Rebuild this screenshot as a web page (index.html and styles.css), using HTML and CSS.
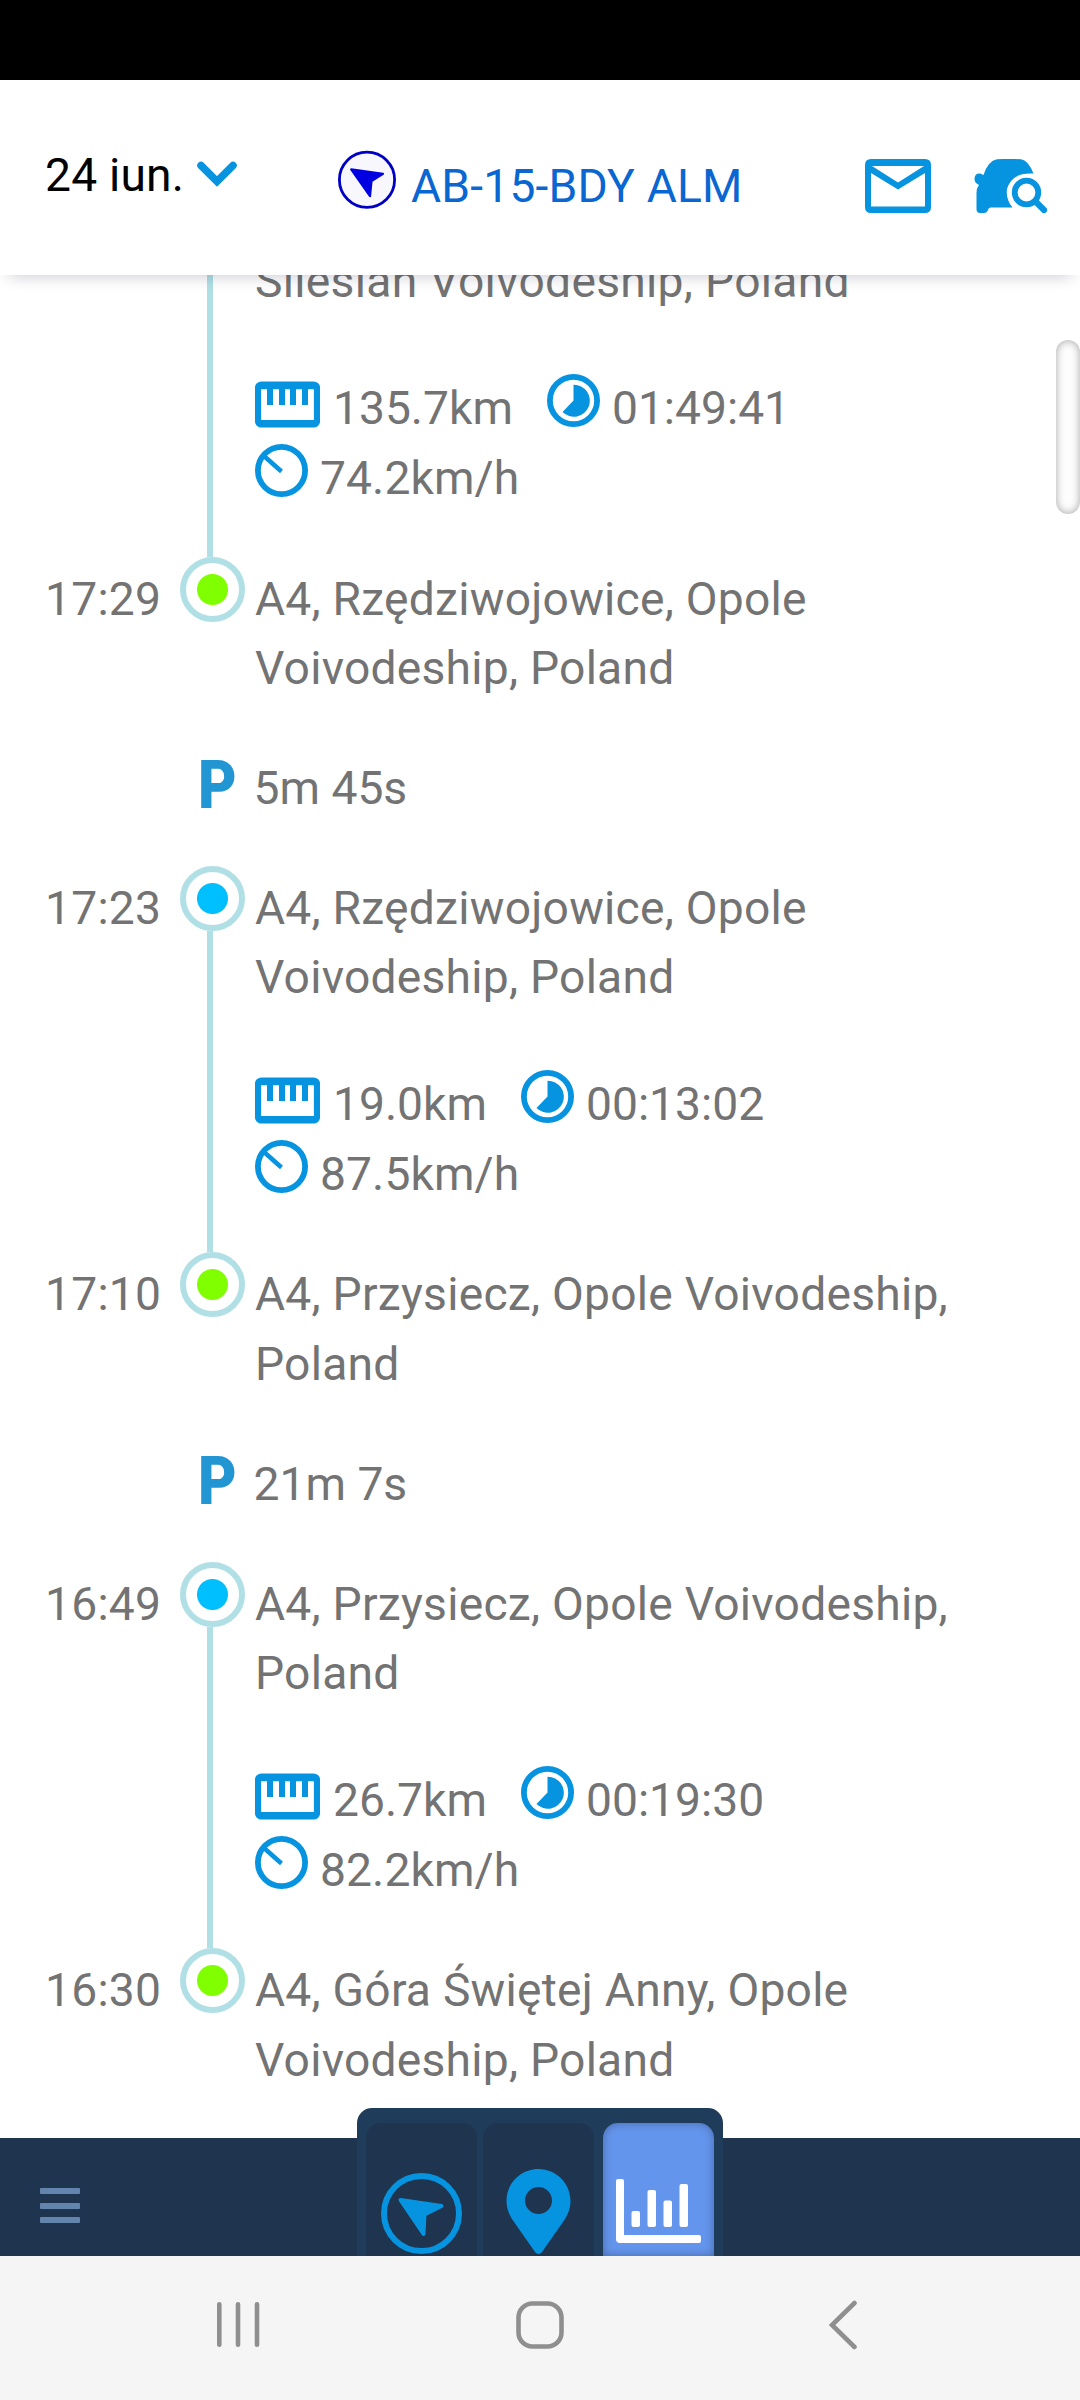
FILE: index.html
```html
<!DOCTYPE html>
<html lang="ro">
  <head>
    <meta charset="UTF-8" />
    <meta name="viewport" content="width=device-width, initial-scale=1.0" />
    <title>AB-15-BDY ALM</title>
    <link rel="stylesheet" href="styles.css">
  </head>
  <body>
    <!-- shared icons -->
    <svg class="sprite">
      <symbol id="ruler" viewBox="0 0 65 54">
        <rect x="3" y="10.5" width="59" height="40" rx="3.5" fill="none" stroke="currentColor" stroke-width="6.2" />
        <path d="M5 8h55v7.2H5zM12 12h6v19h-6zM24 12h6v19h-6zM35 12h6v19h-6zM47 12h6v19h-6zM5 46h55v6H5z" />
      </symbol>
      <symbol id="clock" viewBox="0 0 53 53">
        <circle cx="26.5" cy="26.5" r="23.6" fill="none" stroke="currentColor" stroke-width="5.8" />
        <path d="M26.5 10.7a16 16 0 1 1-11 27.3l11-11.5z" />
      </symbol>
      <symbol id="speed" viewBox="0 0 53 53">
        <circle cx="26.5" cy="26.5" r="23.6" fill="none" stroke="currentColor" stroke-width="5.8" />
        <path d="M9 12L26.5 27.5" stroke="currentColor" stroke-width="4.5" />
      </symbol>
    </svg>

    <div class="screen">
      <div class="status-bar"></div>

      <header class="header">
        <div class="date">
          <span>24 iun.</span>
          <svg width="40" height="26" viewBox="0 0 40 26"><path d="M4 4.5L20 20.5L36 4.5" fill="none" stroke="currentColor" stroke-width="7.5" stroke-linecap="round" /></svg>
        </div>
        <div class="vehicle">
          <svg width="58" height="60" viewBox="0 0 58 60">
            <circle cx="29" cy="29.7" r="27.6" fill="#f8f8fc" stroke="#0000c4" stroke-width="2.8" />
            <path d="M13.2 19.3L45 23.8L33.5 31L32 46.2Z" fill="#0000e0" stroke="#0000e0" stroke-width="2.2" stroke-linejoin="round" />
          </svg>
          <span>AB-15-BDY ALM</span>
        </div>
        <div class="actions">
          <svg width="66" height="54" viewBox="0 0 66 54">
            <path fill-rule="evenodd" d="M6 0H60Q66 0 66 6V48Q66 54 60 54H6Q0 54 0 48V6Q0 0 6 0ZM6 14V47.500H60V14L33 30.500ZM7 7L33 23.500L59 7Z" />
          </svg>
          <svg width="74" height="54" viewBox="0 0 74 54">
            <path d="M23 .3Q35-.5 47 .3Q54 1 59.500 14.500Q38 13 33 30Q31.500 40 38.500 48.500H16.500Q14 49 14 51Q13 54 10 54H6Q2.500 54 2.500 50V34Q2.500 29 5 26Q.5 24 .5 19.500Q1 14 6 14.500Q8 15 9.500 16Q14 2 23 .3Z" />
            <circle cx="52.500" cy="33.500" r="11.800" fill="none" stroke="currentColor" stroke-width="5.800" />
            <path d="M62 43L70 51" stroke="currentColor" stroke-width="6.200" stroke-linecap="round" />
          </svg>
        </div>
      </header>

      <main class="timeline">
        <div class="row before">
          <div class="time"></div>
          <div class="marker"><i class="line"></i></div>
          <div class="address">Silesian Voivodeship, Poland</div>
        </div>
        <div class="row stats">
          <div class="time"></div>
          <div class="marker"><i class="line"></i></div>
          <div class="values">
            <span class="distance"><svg><use href="#ruler" /></svg>135.7km</span>
            <span class="duration"><svg><use href="#clock" /></svg>01:49:41</span>
            <span class="average"><svg><use href="#speed" /></svg>74.2km/h</span>
          </div>
        </div>

        <div class="row stop">
          <div class="time">17:29</div>
          <div class="marker"><i class="ring"></i></div>
          <div class="address">A4, Rzędziwojowice, Opole Voivodeship, Poland</div>
        </div>
        <div class="row parking">
          <div class="p-sign"><b>P</b></div>
          <div>5m 45s</div>
        </div>
        <div class="row start">
          <div class="time">17:23</div>
          <div class="marker"><i class="ring"></i><i class="line"></i></div>
          <div class="address">A4, Rzędziwojowice, Opole Voivodeship, Poland</div>
        </div>
        <div class="row stats">
          <div class="time"></div>
          <div class="marker"><i class="line"></i></div>
          <div class="values">
            <span class="distance"><svg><use href="#ruler" /></svg>19.0km</span>
            <span class="duration"><svg><use href="#clock" /></svg>00:13:02</span>
            <span class="average"><svg><use href="#speed" /></svg>87.5km/h</span>
          </div>
        </div>

        <div class="row stop">
          <div class="time">17:10</div>
          <div class="marker"><i class="ring"></i></div>
          <div class="address">A4, Przysiecz, Opole Voivodeship, Poland</div>
        </div>
        <div class="row parking">
          <div class="p-sign"><b>P</b></div>
          <div>21m 7s</div>
        </div>
        <div class="row start">
          <div class="time">16:49</div>
          <div class="marker"><i class="ring"></i><i class="line"></i></div>
          <div class="address">A4, Przysiecz, Opole Voivodeship, Poland</div>
        </div>
        <div class="row stats">
          <div class="time"></div>
          <div class="marker"><i class="line"></i></div>
          <div class="values">
            <span class="distance"><svg><use href="#ruler" /></svg>26.7km</span>
            <span class="duration"><svg><use href="#clock" /></svg>00:19:30</span>
            <span class="average"><svg><use href="#speed" /></svg>82.2km/h</span>
          </div>
        </div>

        <div class="row stop">
          <div class="time">16:30</div>
          <div class="marker"><i class="ring"></i></div>
          <div class="address">A4, Góra Świętej Anny, Opole Voivodeship, Poland</div>
        </div>
      </main>
      <div class="scroll-thumb"></div>

      <footer class="toolbar">
        <div class="menu"><i></i><i></i><i></i></div>
        <div class="tabs">
          <div class="tab">
            <svg width="111" height="133" viewBox="0 0 111 133">
              <circle cx="55.500" cy="90.500" r="37.500" fill="none" stroke="currentColor" stroke-width="6" />
              <path d="M34.500 77L75.500 83L58.500 91.500L57.500 111Z" stroke="currentColor" stroke-width="4" stroke-linejoin="round" />
            </svg>
          </div>
          <div class="tab">
            <svg width="111" height="133" viewBox="0 0 111 133">
              <path fill-rule="evenodd" d="M55.500 46C73 46 87.500 60 87.500 78C87.500 86 84.500 92 81 97.500L59 129Q55.500 133 52 129L30 97.500C26.500 92 23.500 86 23.500 78C23.500 60 38 46 55.500 46ZM55.500 64a13.500 13.500 0 1 0 0 27a13.500 13.500 0 1 0 0-27Z" />
            </svg>
          </div>
          <div class="tab active">
            <svg width="111" height="133" viewBox="0 0 111 133">
              <path d="M13 58Q13 56 15 56H19Q21 56 21 58V112H96Q98 112 98 114V118Q98 120 96 120H17Q13 120 13 116Z" />
              <rect x="28.500" y="88" width="8.500" height="16" rx="2" />
              <rect x="44.500" y="67" width="8.500" height="37" rx="2" />
              <rect x="60.500" y="77.500" width="8.500" height="26.500" rx="2" />
              <rect x="76.500" y="61" width="8.500" height="43" rx="2" />
            </svg>
          </div>
        </div>
      </footer>

      <nav class="system-nav">
        <svg width="44" height="48" viewBox="0 0 44 48"><path d="M3.300 3.300V43.700M22 3.300V43.700M41 3.300V43.700" /></svg>
        <svg width="48" height="48" viewBox="0 0 48 48"><rect x="2.500" y="2.500" width="43" height="43" rx="14" /></svg>
        <svg width="28" height="50" viewBox="0 0 28 50"><path d="M25.500 3L3 25L25.500 47" /></svg>
      </nav>
    </div>
  </body>
</html>
```

FILE: styles.css
```css
* {
  box-sizing: border-box;
}

body {
  margin: 0;
  background: #fff;
  font-family: Roboto, sans-serif;
  font-size: 46.2px;
  line-height: 69.3px;
  color: #737373;
}

svg {
  display: block;
  fill: currentColor;
}

.sprite {
  display: none;
}

.screen {
  position: relative;
  display: flex;
  flex-direction: column;
  width: 1080px;
  height: 2400px;
  overflow: hidden;
}

.status-bar {
  height: 80px;
  background: #000;
}

/* header */
.header {
  display: flex;
  align-items: flex-start;
  height: 195px;
  background: #fff;
  box-shadow: 0 9px 16px -9px rgba(0, 10, 40, 0.24);
  letter-spacing: 0.2px;
  z-index: 1;
}

.date {
  display: flex;
  width: 338px;
  padding: 61px 0 0 45px;
  color: #000;
}

.date svg {
  margin: 20px 0 0 13px;
  color: #0693e0;
}

.vehicle {
  display: flex;
  flex: 1;
  padding-top: 70px;
  color: #0a66d0;
}

.vehicle span {
  margin: 2px 0 0 15px;
}

.actions {
  display: flex;
  gap: 43px;
  padding: 79px 32px 0 0;
  color: #0693e0;
}

/* timeline */
.timeline {
  flex: 1;
  min-height: 0;
  overflow: hidden;
}

.row {
  display: flex;
}

.before {
  margin-top: -27.7px;
}

.time {
  width: 180px;
  padding-left: 45px;
}

.time,
.address {
  letter-spacing: 0.24px;
}

.marker {
  display: flex;
  flex-direction: column;
  width: 65px;
  margin-right: 10px;
}

.line {
  flex: 1;
  width: 6px;
  margin-left: 27px;
  background: #b0e0e6;
}

.ring {
  height: 65px;
  border: 6px solid #b0e0e6;
  border-radius: 50%;
}

.stop .ring {
  background: radial-gradient(circle, #7fff00 15px, #fff 16px);
}

.start .ring {
  background: radial-gradient(circle, #00bfff 15px, #fff 16px);
}

.address {
  width: 750px;
}

.before .address,
.start .address {
  padding-bottom: 57.8px;
}

.before .address {
  letter-spacing: 0.3px;
}

.stop .time,
.stop .address,
.start .time,
.start .address {
  padding-top: 8px;
}

.stop .address {
  padding-bottom: 50.8px;
}

.parking {
  padding-bottom: 42.8px;
}

.p-sign {
  width: 253.500px;
  padding-left: 197.500px;
}

/* wide strokes, squeezed to the sign's width */
.p-sign b {
  display: block;
  width: 44px;
  height: 69px;
  font-size: 66px;
  font-weight: 900;
  color: #2196d3;
  transform: translateY(-3px) scaleX(0.9);
  transform-origin: left;
}

.values {
  display: flex;
  flex-wrap: wrap;
  width: 700px;
  padding-bottom: 43.5px;
}

.values span {
  display: flex;
}

.values svg {
  width: 53px;
  height: 53px;
  margin-right: 12px;
  color: #0693e0;
}

.values .distance svg {
  width: 65px;
  height: 54px;
  margin-right: 13px;
}

.duration {
  margin: 0 60px 0 34px;
}

.average {
  width: 400px;
  letter-spacing: 0.1px;
}

.scroll-thumb {
  position: absolute;
  top: 340px;
  right: 0;
  width: 24px;
  height: 174px;
  border-radius: 12px;
  background: #fdfdfd;
  box-shadow: inset 0 0 9px rgba(0, 0, 0, 0.35);
}

/* bottom toolbar */
.toolbar {
  display: flex;
  align-items: flex-end;
  height: 118px;
  background: #1f344f;
}

.menu {
  display: flex;
  flex-direction: column;
  gap: 8.500px;
  width: 357px;
  padding: 0 0 33px 40px;
}

.menu i {
  width: 40px;
  height: 6px;
  border-radius: 1px;
  background: #6384ac;
}

.tabs {
  display: flex;
  width: 366px;
  height: 148px;
  padding: 15px 9px 0;
  border-radius: 15px 15px 0 0;
  background: #1f3d5a;
  z-index: 1;
}

.tab {
  width: 111px;
  margin-right: 6px;
  border-radius: 15px 15px 0 0;
  background: #1f344f;
  color: #0693e0;
}

.tab.active {
  margin: 0 0 0 3px;
  background: #6495ed;
  box-shadow: inset 0 0 10px rgba(0, 0, 0, 0.3);
  color: #fff;
}

/* system navigation */
.system-nav {
  display: flex;
  align-items: center;
  height: 144px;
  padding: 0 0 6px 216px;
  background: #f5f5f5;
}

.system-nav svg {
  margin-right: 256px;
  fill: none;
  stroke: #8f8f8f;
  stroke-width: 4.600px;
  stroke-linecap: round;
}

.system-nav svg:nth-child(2) {
  margin-right: 265px;
}

.system-nav svg:last-child {
  margin-right: 0;
}
```
